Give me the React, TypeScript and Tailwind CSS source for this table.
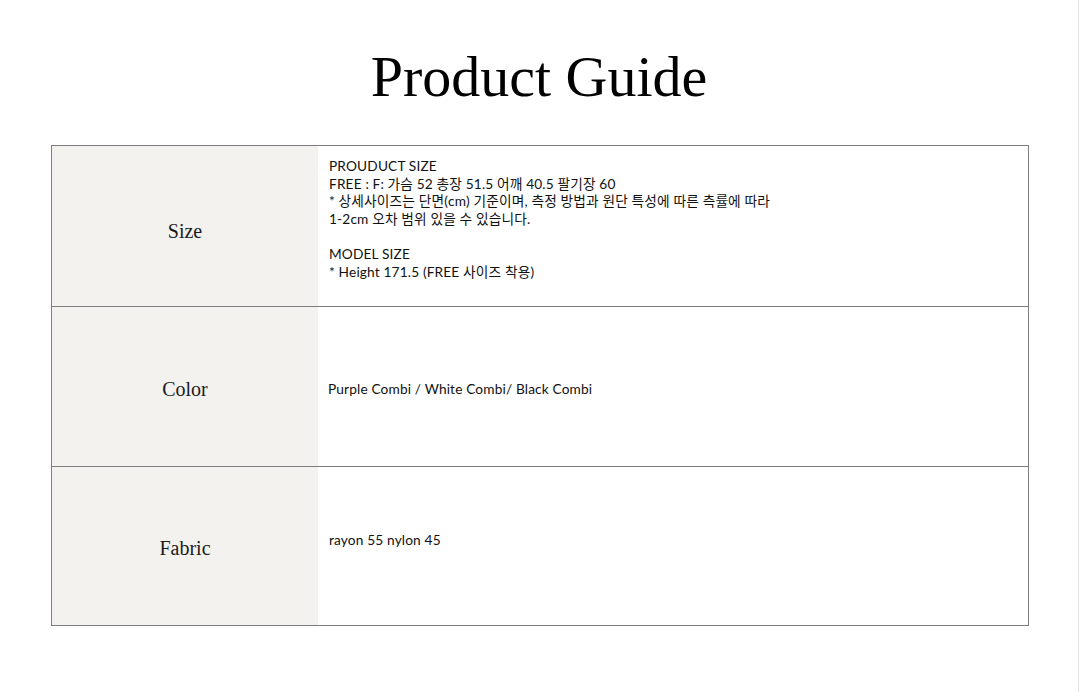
const rows = [
  {
    label: "Size",
    rowClass: "h-[160px]",
    labelClass: "pt-[10px]",
    content: (
      <div className="pt-[11px]">
        <p>PROUDUCT SIZE</p>
        <p>FREE : F: 가슴 52 총장 51.5 어깨 40.5 팔기장 60</p>
        <p>* 상세사이즈는 단면(cm) 기준이며, 측정 방법과 원단 특성에 따른 측률에 따라</p>
        <p>1-2cm 오차 범위 있을 수 있습니다.</p>
        <p>&nbsp;</p>
        <p>MODEL SIZE</p>
        <p>* Height 171.5 (FREE 사이즈 착용)</p>
      </div>
    ),
  },
  {
    label: "Color",
    rowClass: "h-[160px] border-t border-[#7d7d7d]",
    labelClass: "pt-[4px]",
    content: <p className="-ml-[1px] pt-[73px]">Purple Combi / White Combi/ Black Combi</p>,
  },
  {
    label: "Fabric",
    rowClass: "h-[159px] border-t border-[#7d7d7d]",
    labelClass: "pt-[4px]",
    content: <p className="pt-[64px]">rayon 55 nylon 45</p>,
  },
];

export default function App() {
  return (
    <div className="flex min-h-[692px] w-[1080px] bg-white">
      <main className="w-[1079px] border-r border-[#e4e4e4] pt-[37px]">
        <h1 className="text-center font-['Liberation_Serif',serif] text-[58px] leading-[80px] text-black">
          Product Guide
        </h1>

        <div className="mx-[51px] mt-[28px] w-[978px] border border-[#7d7d7d]">
          {rows.map((row) => (
            <div key={row.label} className={`flex ${row.rowClass}`}>
              <div
                className={`flex w-[266px] items-center justify-center bg-[#f3f2ee] font-['Liberation_Serif',serif] text-[20px] text-[#1a1a1a] ${row.labelClass}`}
              >
                {row.label}
              </div>
              <div className="flex-1 pl-[11px] font-['Lato','Noto_Sans_CJK_KR',sans-serif] text-[13.7px] leading-[17.6px] tracking-[0.15px] text-[#111]">
                {row.content}
              </div>
            </div>
          ))}
        </div>
      </main>
    </div>
  );
}
